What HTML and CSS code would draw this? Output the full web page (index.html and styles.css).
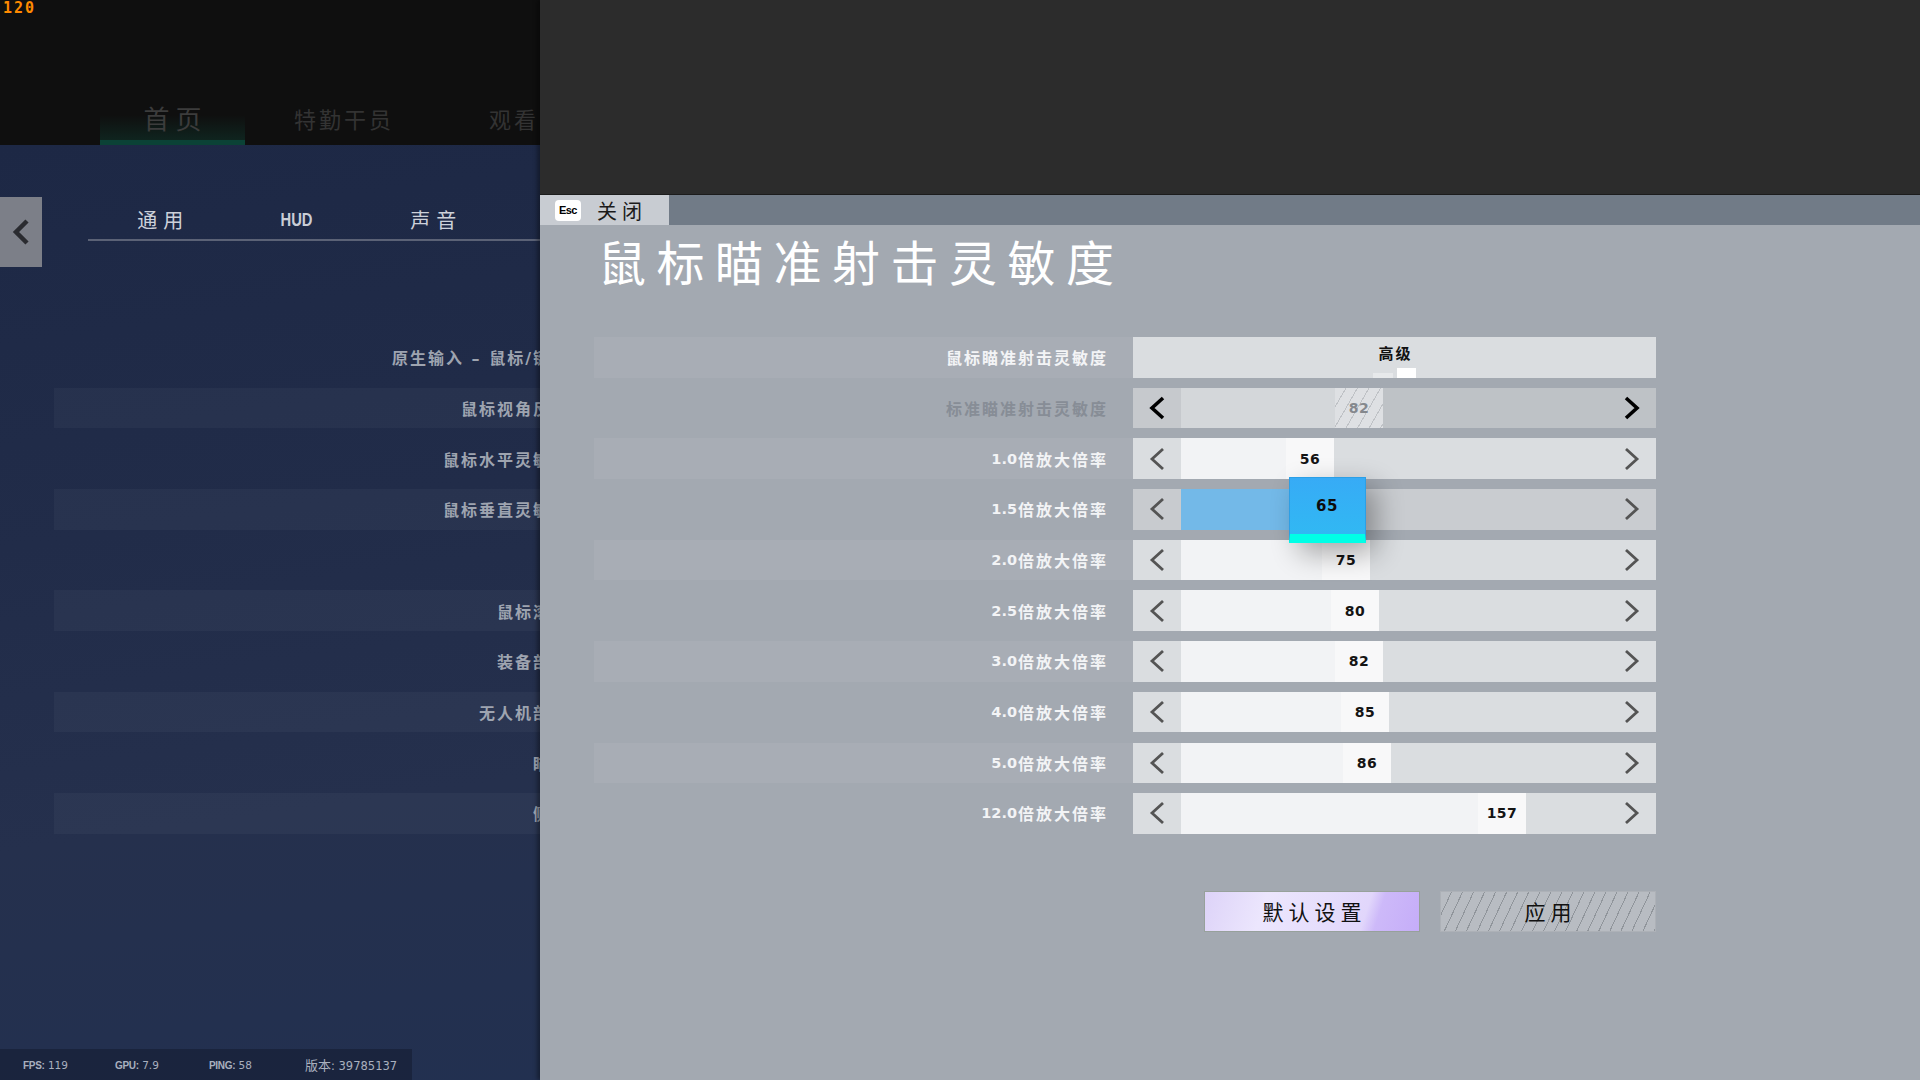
FILE: index.html
```html
<!DOCTYPE html>
<html lang="zh-CN">
<head>
<meta charset="utf-8">
<title>鼠标瞄准射击灵敏度</title>
<link rel="stylesheet" href="styles.css">
</head>
<body>
<div class="screen">
  <aside class="bg-menu">
    <div class="topbar">
      <div class="fps-counter">120</div>
      <nav class="main-tabs">
        <div class="main-tab active">首页</div>
        <div class="main-tab">特勤干员</div>
        <div class="main-tab">观看</div>
      </nav>
    </div>
    <div class="bg-body">
      <div class="sub-header">
        <div class="back-btn">
          <svg viewBox="0 0 18 26"><polyline points="15,2 4,13 15,24" fill="none" stroke="currentColor" stroke-width="4.5"/></svg>
        </div>
        <div class="sub-tabs">
          <div class="sub-tab">通用</div>
          <div class="sub-tab"><span class="hud">HUD</span></div>
          <div class="sub-tab">声音</div>
        </div>
      </div>
      <div class="bg-rows">
        <div class="bg-row">原生输入 – 鼠标/键盘</div>
        <div class="bg-row striped">鼠标视角反转</div>
        <div class="bg-row">鼠标水平灵敏度</div>
        <div class="bg-row striped">鼠标垂直灵敏度</div>
        <div class="bg-row"></div>
        <div class="bg-row striped">鼠标滚轮</div>
        <div class="bg-row">装备部署</div>
        <div class="bg-row striped">无人机部署</div>
        <div class="bg-row">瞄准</div>
        <div class="bg-row striped">侧身</div>
      </div>
      <div class="stats">
        <div class="stat s-fps"><b>FPS:</b> 119</div>
        <div class="stat s-gpu"><b>GPU:</b> 7.9</div>
        <div class="stat s-ping"><b>PING:</b> 58</div>
        <div class="stat s-ver"><span class="cjk">版本</span>: 39785137</div>
      </div>
    </div>
  </aside>

  <main class="dialog">
    <div class="dialog-top"></div>
    <div class="dialog-bar">
      <div class="esc-tab"><span class="esc-key">Esc</span><span class="esc-label">关闭</span></div>
    </div>
    <div class="dialog-body">
      <h1 class="title">鼠标瞄准射击灵敏度</h1>
      <div class="rows">
        <div class="row striped">
          <div class="row-label">鼠标瞄准射击灵敏度</div>
          <div class="select">
            <div class="select-value">高级</div>
            <div class="pager"><span class="dot"></span><span class="dot on"></span></div>
          </div>
        </div>

        <div class="row disabled">
          <div class="row-label">标准瞄准射击灵敏度</div>
          <div class="control">
            <div class="arrow left"><svg viewBox="0 0 18 24"><polyline points="15,2 4,12 15,22"/></svg></div>
            <div class="track"><div class="fill" style="width:154px"></div><div class="handle">82</div><div class="rest"></div></div>
            <div class="arrow right"><svg viewBox="0 0 18 24"><polyline points="3,2 14,12 3,22"/></svg></div>
          </div>
        </div>

        <div class="row striped">
          <div class="row-label"><span class="num">1.0</span>倍放大倍率</div>
          <div class="control">
            <div class="arrow left"><svg viewBox="0 0 18 24"><polyline points="15,2 4,12 15,22"/></svg></div>
            <div class="track"><div class="fill" style="width:105px"></div><div class="handle">56</div><div class="rest"></div></div>
            <div class="arrow right"><svg viewBox="0 0 18 24"><polyline points="3,2 14,12 3,22"/></svg></div>
          </div>
        </div>

        <div class="row focused">
          <div class="row-label"><span class="num">1.5</span>倍放大倍率</div>
          <div class="control">
            <div class="arrow left"><svg viewBox="0 0 18 24"><polyline points="15,2 4,12 15,22"/></svg></div>
            <div class="track"><div class="fill" style="width:122px"></div><div class="handle"><div class="handle-pop">65</div></div><div class="rest"></div></div>
            <div class="arrow right"><svg viewBox="0 0 18 24"><polyline points="3,2 14,12 3,22"/></svg></div>
          </div>
        </div>

        <div class="row striped">
          <div class="row-label"><span class="num">2.0</span>倍放大倍率</div>
          <div class="control">
            <div class="arrow left"><svg viewBox="0 0 18 24"><polyline points="15,2 4,12 15,22"/></svg></div>
            <div class="track"><div class="fill" style="width:141px"></div><div class="handle">75</div><div class="rest"></div></div>
            <div class="arrow right"><svg viewBox="0 0 18 24"><polyline points="3,2 14,12 3,22"/></svg></div>
          </div>
        </div>

        <div class="row">
          <div class="row-label"><span class="num">2.5</span>倍放大倍率</div>
          <div class="control">
            <div class="arrow left"><svg viewBox="0 0 18 24"><polyline points="15,2 4,12 15,22"/></svg></div>
            <div class="track"><div class="fill" style="width:150px"></div><div class="handle">80</div><div class="rest"></div></div>
            <div class="arrow right"><svg viewBox="0 0 18 24"><polyline points="3,2 14,12 3,22"/></svg></div>
          </div>
        </div>

        <div class="row striped">
          <div class="row-label"><span class="num">3.0</span>倍放大倍率</div>
          <div class="control">
            <div class="arrow left"><svg viewBox="0 0 18 24"><polyline points="15,2 4,12 15,22"/></svg></div>
            <div class="track"><div class="fill" style="width:154px"></div><div class="handle">82</div><div class="rest"></div></div>
            <div class="arrow right"><svg viewBox="0 0 18 24"><polyline points="3,2 14,12 3,22"/></svg></div>
          </div>
        </div>

        <div class="row">
          <div class="row-label"><span class="num">4.0</span>倍放大倍率</div>
          <div class="control">
            <div class="arrow left"><svg viewBox="0 0 18 24"><polyline points="15,2 4,12 15,22"/></svg></div>
            <div class="track"><div class="fill" style="width:160px"></div><div class="handle">85</div><div class="rest"></div></div>
            <div class="arrow right"><svg viewBox="0 0 18 24"><polyline points="3,2 14,12 3,22"/></svg></div>
          </div>
        </div>

        <div class="row striped">
          <div class="row-label"><span class="num">5.0</span>倍放大倍率</div>
          <div class="control">
            <div class="arrow left"><svg viewBox="0 0 18 24"><polyline points="15,2 4,12 15,22"/></svg></div>
            <div class="track"><div class="fill" style="width:162px"></div><div class="handle">86</div><div class="rest"></div></div>
            <div class="arrow right"><svg viewBox="0 0 18 24"><polyline points="3,2 14,12 3,22"/></svg></div>
          </div>
        </div>

        <div class="row">
          <div class="row-label"><span class="num">12.0</span>倍放大倍率</div>
          <div class="control">
            <div class="arrow left"><svg viewBox="0 0 18 24"><polyline points="15,2 4,12 15,22"/></svg></div>
            <div class="track"><div class="fill" style="width:297px"></div><div class="handle">157</div><div class="rest"></div></div>
            <div class="arrow right"><svg viewBox="0 0 18 24"><polyline points="3,2 14,12 3,22"/></svg></div>
          </div>
        </div>
      </div>

      <div class="actions">
        <div class="btn btn-default">默认设置</div>
        <div class="btn btn-apply">应用</div>
      </div>
    </div>
  </main>
</div>
</body>
</html>
```

FILE: styles.css
```css
* { box-sizing: border-box; margin: 0; padding: 0; }
html, body { width: 1920px; height: 1080px; overflow: hidden; }
body { font-family: "Noto Sans CJK SC", sans-serif; background: #0f0f0f; }

.screen { display: flex; width: 1920px; height: 1080px; }

/* ---------- background menu (left) ---------- */
.bg-menu {
  width: 540px; flex: none; height: 1080px; overflow: hidden;
  display: flex; flex-direction: column;
}
.topbar { height: 145px; flex: none; background: #0f0f0f; display: flex; flex-direction: column; }
.fps-counter {
  font-family: "DejaVu Sans Mono", monospace; font-weight: bold;
  font-size: 15px; line-height: 16px; height: 16px; color: #ff8a00; padding-left: 3px; letter-spacing: 2px;
}
.main-tabs { margin-top: auto; display: flex; gap: 25px; padding-left: 100px; height: 50px; width: 720px; flex: none; }
.main-tab {
  width: 145px; flex: none; display: flex; align-items: center; justify-content: center;
  font-size: 22px; letter-spacing: 3px; padding-left: 3px; color: #333333; padding-bottom: 4px;
}
.main-tab.active {
  font-size: 26px; letter-spacing: 6px; padding-left: 6px; padding-bottom: 6px; color: #3c3c3c;
  background: linear-gradient(to top, #0b4236 0, #0b4236 5px, rgba(14,110,86,0.22) 5px, rgba(14,110,86,0) 30px);
}

.bg-body {
  flex: 1; display: flex; flex-direction: column; padding-top: 52px;
  background: linear-gradient(172deg, #1d2845 0%, #212c49 40%, #25304d 70%, #223050 100%);
}
.sub-header { display: flex; height: 70px; flex: none; }
.back-btn {
  width: 42px; height: 70px; flex: none; background: #7c7f88; color: #2a2b30;
  display: flex; align-items: center; justify-content: center;
}
.back-btn svg { width: 18px; height: 26px; }
.sub-tabs {
  margin-left: 46px; width: 560px; flex: none; height: 44px; padding: 4px 0 0 4px;
  border-bottom: 2px solid #5b6276; display: flex;
}
.sub-tab {
  width: 136.5px; flex: none; display: flex; align-items: center; justify-content: center;
  font-size: 20px; letter-spacing: 6px; padding-left: 6px; color: #cdd1da; line-height: 1;
}
.hud {
  display: inline-block; font-family: "Liberation Sans", sans-serif; font-weight: bold;
  font-size: 18px; letter-spacing: 0; transform: scaleX(0.82); color: #c9cdd6;
  margin-left: -6px;
}

.bg-rows { margin-top: 70px; margin-left: 54px; width: 540px; display: flex; flex-direction: column; gap: 10.2px; }
.bg-row {
  height: 40.5px; display: flex; align-items: center; justify-content: flex-end;
  padding-right: 25px; white-space: nowrap;
  font-family: "DejaVu Sans", "Noto Sans CJK SC", sans-serif; font-weight: bold;
  font-size: 16px; letter-spacing: 2px; color: #9ea4b0;
}
.bg-row.striped { background: rgba(255,255,255,0.035); }

.stats {
  margin-top: auto; height: 31px; width: 412px; flex: none;
  background: rgba(8,12,26,0.32); display: flex; align-items: center; padding-left: 23px;
  font-family: "DejaVu Sans", sans-serif; font-size: 10.5px; color: #a9b0bf; white-space: nowrap;
}
.stat { flex: none; }
.stat b { font-family: "Liberation Sans", sans-serif; font-weight: bold; font-size: 10px; letter-spacing: -0.3px; }
.s-fps { width: 92px; }
.s-gpu { width: 94px; }
.s-ping { width: 96px; }
.s-ver { font-size: 11.5px; }
.stat .cjk { font-family: "Noto Sans CJK SC", sans-serif; font-size: 13px; }

/* ---------- dialog (right) ---------- */
.dialog {
  flex: 1; display: flex; flex-direction: column;
  box-shadow: -3px 0 4px rgba(0,0,0,0.35); position: relative; z-index: 1;
}
.dialog-top { height: 195px; flex: none; background: #2c2c2c; border-bottom: 1px solid #1c1c1c; }
.dialog-bar { height: 30px; flex: none; background: #717b87; display: flex; }
.esc-tab {
  width: 129px; background: #c8ccd2; display: flex; align-items: center;
  padding-left: 15px; gap: 16px;
}
.esc-key {
  width: 26px; height: 21px; background: #ffffff; border-radius: 4px;
  display: flex; align-items: center; justify-content: center;
  font-family: "Liberation Sans", sans-serif; font-weight: bold; font-size: 11px;
  letter-spacing: -0.6px; color: #000;
}
.esc-label { font-size: 20px; line-height: 1; letter-spacing: 5px; color: #1b1b1b; padding-top: 2px; }

.dialog-body {
  flex: 1; background: #a3a9b1; padding: 11px 264px 0 54px;
  display: flex; flex-direction: column;
}
.title {
  font-size: 48px; line-height: 48px; height: 48px; font-weight: 400; color: #ffffff;
  letter-spacing: 10.5px; margin-left: 4px; white-space: nowrap;
}

.rows { margin-top: 53px; display: flex; flex-direction: column; gap: 10.2px; }
.row { height: 40.5px; display: flex; }
.row-label {
  width: 539px; flex: none; display: flex; align-items: center; justify-content: flex-end;
  padding-right: 25px; white-space: nowrap;
  font-family: "DejaVu Sans", "Noto Sans CJK SC", sans-serif; font-weight: bold;
  font-size: 16px; letter-spacing: 2px; color: #f3f4f6;
}
.row-label .num { font-size: 14.5px; letter-spacing: 0; margin-right: 1px; }
.row.striped .row-label { background: rgba(255,255,255,0.055); }
.row.disabled .row-label { color: #878d96; }

.select {
  flex: 1; background: #dadde0; display: flex; flex-direction: column; align-items: center;
  padding-top: 7px;
}
.select-value { font-weight: bold; font-size: 15px; line-height: 18px; letter-spacing: 2px; padding-left: 2px; color: #111; }
.pager { margin-top: auto; display: flex; align-items: flex-end; gap: 4px; }
.pager .dot { display: block; width: 20px; height: 5px; background: #e7e9eb; }
.pager .dot.on { width: 19px; height: 10px; background: #ffffff; }

.control { flex: 1; display: flex; background: #dadde0; }
.arrow { width: 48px; flex: none; display: flex; align-items: center; justify-content: center; }
.arrow svg { width: 18px; height: 24px; }
.arrow polyline { fill: none; stroke: #545454; stroke-width: 2.8; }
.track { flex: 1; display: flex; }
.fill { flex: none; background: #f2f3f5; }
.handle {
  width: 48px; flex: none; background: #f8f8f9;
  display: flex; align-items: center; justify-content: center;
  font-family: "DejaVu Sans", sans-serif; font-weight: bold; font-size: 14px; color: #141414;
  letter-spacing: 0.5px;
}
.rest { flex: 1; }

/* disabled row */
.row.disabled .control { background: #bec2c6; }
.row.disabled .arrow.left { background: #c6c9cd; }
.row.disabled .arrow polyline { stroke: #000; stroke-width: 3.6; }
.row.disabled .fill { background: #d4d7da; }
.row.disabled .handle {
  background: repeating-linear-gradient(120deg, rgba(0,0,0,0) 0, rgba(0,0,0,0) 9px, #bfc2c6 9px, #bfc2c6 10px), #dee0e3;
  color: #85888d;
}

/* focused row */
.row.focused .control { background: #c9ccd0; }
.row.focused .arrow.left { background: #c8cbcf; }
.row.focused .fill { background: #73b9e8; }
.row.focused .handle { background: transparent; position: relative; z-index: 3; }
.handle-pop {
  position: absolute; left: -14.5px; top: -12px; width: 77px; height: 66px;
  background: linear-gradient(#37abf6, #31b8f3);
  border: 1px solid #2c9fe6; border-bottom: 9px solid #00ffe6;
  box-shadow: 10px 10px 28px rgba(0,0,0,0.33);
  display: flex; align-items: center; justify-content: center;
  font-size: 15px; color: #0d0d0d;
}

/* action buttons */
.actions { margin-top: 57px; display: flex; justify-content: flex-end; gap: 20px; }
.btn {
  width: 216px; height: 41px; display: flex; align-items: center; justify-content: center;
  font-size: 21px; letter-spacing: 5px; padding-left: 5px; color: #111;
}
.btn-default {
  background: linear-gradient(108deg, #ddd3f8 0%, #ece6fd 28%, #e6defc 55%, #e1d6fb 74%, #cdb9f9 80%, #c5adf8 100%);
  border: 1px solid #97a19b;
}
.btn-apply {
  background: repeating-linear-gradient(115deg, rgba(0,0,0,0) 0, rgba(0,0,0,0) 9px, #90959b 9px, #90959b 10px), #b8bcc2;
  border: 1px solid #adb1b7;
}
```
